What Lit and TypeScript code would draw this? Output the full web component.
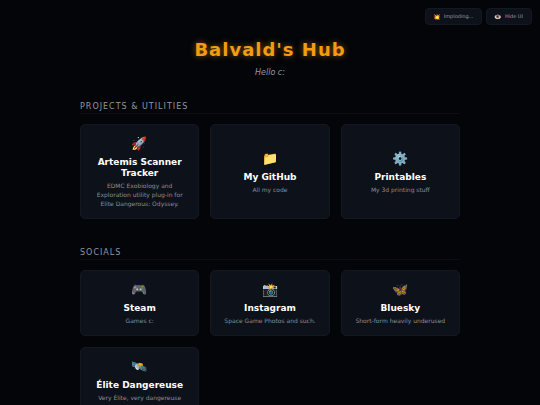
import { LitElement, html, css } from "lit";
import { customElement, property } from "lit/decorators.js";

interface HubLink {
  icon: string;
  title: string;
  text: string;
}

const projects: HubLink[] = [
  {
    icon: "🚀",
    title: "Artemis Scanner Tracker",
    text: "EDMC Exobiology and Exploration utility plug-in for Elite Dangerous: Odyssey.",
  },
  { icon: "📁", title: "My GitHub", text: "All my code" },
  { icon: "⚙️", title: "Printables", text: "My 3d printing stuff" },
];

const socials: HubLink[] = [
  { icon: "🎮", title: "Steam", text: "Games c:" },
  { icon: "📸", title: "Instagram", text: "Space Game Photos and such." },
  { icon: "🦋", title: "Bluesky", text: "Short-form heavily underused" },
  { icon: "🛰️", title: "Élite Dangereuse", text: "Very Élite, very dangereuse" },
];

@customElement("hub-section")
export class HubSection extends LitElement {
  @property() heading = "";
  @property({ attribute: false }) links: HubLink[] = [];

  static styles = css`
    :host {
      display: block;
    }
    .heading {
      margin: 0 0 10px;
      border-bottom: 1px solid #0d0e12;
      font-size: 8px;
      line-height: 12px;
      font-weight: 400;
      letter-spacing: 1px;
      text-transform: uppercase;
      color: #94979d;
    }
    .grid {
      display: grid;
      grid-template-columns: repeat(auto-fit, minmax(105px, 1fr));
      gap: 11px;
    }
    .card {
      box-sizing: border-box;
      display: flex;
      flex-direction: column;
      align-items: center;
      justify-content: center;
      padding: 10px;
      border: 1px solid #131922;
      border-radius: 5px;
      background: #0d1119;
      color: #fff;
      text-align: center;
      text-decoration: none;
    }
    .icon {
      font-size: 13px;
      line-height: 17px;
      margin-bottom: 5px;
    }
    .title {
      margin: 0 0 2px;
      font-size: 9px;
      line-height: 11px;
      font-weight: 700;
    }
    .text {
      margin: 0;
      font-size: 6px;
      line-height: 9px;
      color: #8b8f97;
    }
  `;

  render() {
    return html`
      <h2 class="heading">${this.heading}</h2>
      <div class="grid">
        ${this.links.map(
          (link) => html`
            <a class="card" href="#">
              <span class="icon" aria-hidden="true">${link.icon}</span>
              <h3 class="title">${link.title}</h3>
              <p class="text">${link.text}</p>
            </a>
          `
        )}
      </div>
    `;
  }
}

@customElement("app-root")
export class AppRoot extends LitElement {
  static styles = css`
    :host {
      display: block;
      box-sizing: border-box;
      min-height: 100vh;
      background: #040509;
      font-family: "DejaVu Sans", Verdana, "Noto Color Emoji", sans-serif;
      color: #fff;
    }
    .controls {
      position: absolute;
      top: 8px;
      right: 8px;
      display: flex;
      gap: 4px;
    }
    .control {
      display: flex;
      align-items: center;
      gap: 3px;
      padding: 3px 7px;
      border: 1px solid #131922;
      border-radius: 4px;
      background: #0d1119;
      color: #9a9da5;
      font: inherit;
      font-size: 5px;
      line-height: 9px;
    }
    .control-icon {
      font-size: 6px;
    }
    .control-label {
      padding-right: 1px;
    }
    .page {
      box-sizing: border-box;
      max-width: 380px;
      margin: 0 auto;
      padding: 37px 0 22px;
    }
    .header {
      text-align: center;
      margin-bottom: 22px;
    }
    .name {
      margin: 0 0 5px;
      font-size: 18px;
      line-height: 25px;
      font-weight: 700;
      letter-spacing: 1px;
      color: #f39c12;
      text-shadow: 0 0 6px rgba(243, 156, 18, 0.5);
    }
    .tagline {
      margin: 0;
      font-size: 8px;
      line-height: 12px;
      font-style: italic;
      color: #94979d;
    }
    .sections {
      display: grid;
      gap: 28px;
    }
  `;

  render() {
    return html`
      <div class="controls">
        <button class="control" type="button">
          <span class="control-icon" aria-hidden="true">💥</span>
          <span class="control-label">Imploding...</span>
        </button>
        <button class="control" type="button">
          <span class="control-icon" aria-hidden="true">👁️</span>
          <span class="control-label">Hide UI</span>
        </button>
      </div>
      <main class="page">
        <header class="header">
          <h1 class="name">Balvald's Hub</h1>
          <p class="tagline">Hello c:</p>
        </header>
        <div class="sections">
          <hub-section heading="Projects &amp; Utilities" .links=${projects}></hub-section>
          <hub-section heading="Socials" .links=${socials}></hub-section>
        </div>
      </main>
    `;
  }
}
